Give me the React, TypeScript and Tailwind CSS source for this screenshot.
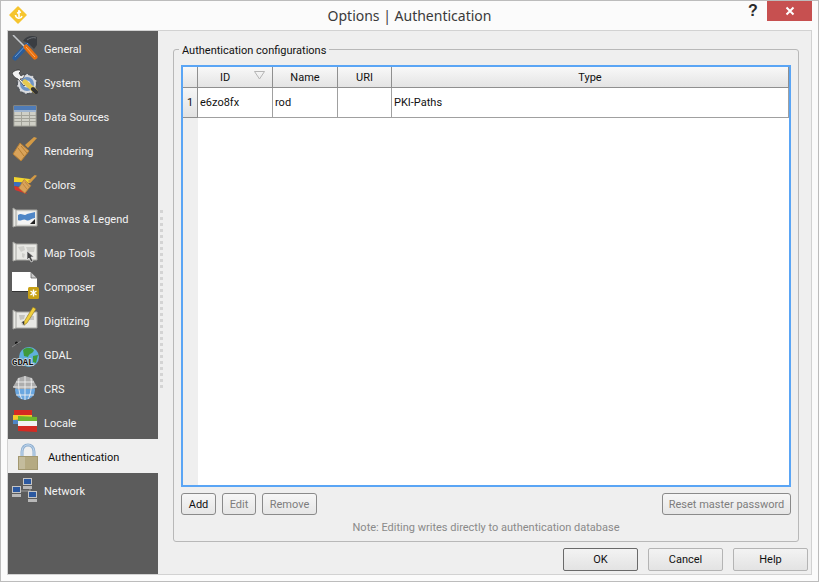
import { ReactNode } from "react";

const IconGeneral = () => (
  <svg viewBox="0 0 26 26" className="w-[26px] h-[26px] shrink-0">
    <path d="M3 23 L17 8" stroke="#2a5d9c" strokeWidth="5" strokeLinecap="round" />
    <path d="M3 22 L16 8" stroke="#6f9dd2" strokeWidth="1" />
    <path d="M11 6 C14 1 20 0 25 2 L25 10 L22 14 L18 10 C17 8 14 7 11 6 Z" fill="#3a3d42" />
    <path d="M15 5 C18 3 21 2 24 3" stroke="#6d7176" strokeWidth="1" fill="none" />
    <path d="M1 0 L14 13" stroke="#c4c8cc" strokeWidth="1.500" />
    <path d="M14 12 L23 22" stroke="#e8700f" strokeWidth="5" strokeLinecap="round" />
    <path d="M14 12 L23 22" stroke="#fbae68" strokeWidth="1" />
  </svg>
);

const IconSystem = () => (
  <svg viewBox="0 0 26 26" className="w-[26px] h-[26px] shrink-0">
    <circle cx="15" cy="15" r="10" fill="#d8dade" stroke="#55585c" strokeDasharray="4 2" strokeWidth="2" />
    <circle cx="15" cy="15" r="7" fill="#6f94c4" />
    <circle cx="15" cy="15" r="3.500" fill="#dfe3e8" />
    <path d="M0 4 C3 1 7 0 9 2 L7 4 L9 7 L12 5 C13 8 11 10 8 10 L14 15 L12 17 L6 10 C3 9 1 7 0 4 Z" fill="#f2f2f2" stroke="#2c2c2c" strokeWidth="0.7" />
    <path d="M13 13 L23 22" stroke="#e6c94e" strokeWidth="5" strokeLinecap="round" />
    <path d="M21 20 L24 23" stroke="#333" strokeWidth="4" strokeLinecap="round" />
  </svg>
);

const IconDataSources = () => (
  <svg viewBox="0 0 26 26" className="w-[26px] h-[26px] shrink-0">
    <rect x="2" y="3" width="22" height="20" fill="#cfcfc6" stroke="#a9a9a0" />
    <rect x="2" y="3" width="22" height="4" fill="#4f7cb8" />
    <rect x="2" y="7" width="22" height="2" fill="#9fb4cf" />
    <path d="M2 12.500H24M2 15.500H24M2 18.500H24M9.500 9V23M17.500 9V23" stroke="#a3a39a" strokeWidth="1" />
  </svg>
);

const IconBrush = () => (
  <>
    <path d="M22 0 L25 1 L16 11 L13 8 Z" fill="#d39a45" />
    <path d="M8 6 L17 14 L9 24 L1 17 Z" fill="#d9a35a" stroke="#b67f33" />
    <path d="M6 11 L12 19 M9 9 L15 16" stroke="#b67f33" strokeWidth="1" />
  </>
);

const IconRendering = () => (
  <svg viewBox="0 0 26 26" className="w-[26px] h-[26px] shrink-0">
    <IconBrush />
  </svg>
);

const IconColors = () => (
  <svg viewBox="0 0 26 26" className="w-[26px] h-[26px] shrink-0">
    <path d="M2 6 L18 8 L18 12 L2 11 Z" fill="#f2d52e" />
    <path d="M2 11 L14 12 L12 16 L2 15 Z" fill="#3a6fc2" />
    <path d="M2 15 L11 17 L15 23 L3 19 Z" fill="#d8342c" />
    <g transform="translate(6 4) scale(0.76)">
      <IconBrush />
    </g>
  </svg>
);

const MapSheet = ({ children }: { children?: ReactNode }) => (
  <svg viewBox="0 0 26 26" className="w-[26px] h-[26px] shrink-0">
    <path d="M1 3 L4 5 L25 5 L25 21 L4 21 L1 22 Z" fill="#e9e9e5" stroke="#a6a6a2" />
    <path d="M4 5 L4 21" stroke="#a6a6a2" />
    {children}
  </svg>
);

const IconCanvas = () => (
  <MapSheet>
    <rect x="6" y="7" width="17" height="12" fill="#f4f4f4" />
    <path d="M6 10 C10 7 12 12 15 9 L23 7 L23 13 C19 13 17 17 14 15 C11 13 9 17 6 15 Z" fill="#4f86c6" />
    <path d="M18 19 L23 14 L23 19 Z" fill="#222" />
  </MapSheet>
);

const IconMapTools = () => (
  <MapSheet>
    <path d="M6 8 L12 7 L13 11 L9 13 Z M14 8 L23 8 L22 13 L16 13 Z M10 14 L13 15 L12 19 L10 18 Z" fill="#d0d0cc" />
    <path d="M15 12 L15 21 L17 19 L19 23 L21 22 L19 18 L22 18 Z" fill="#444" stroke="#e8e8e8" strokeWidth="0.7" />
  </MapSheet>
);

const IconComposer = () => (
  <svg viewBox="0 0 26 26" className="w-[26px] h-[26px] shrink-0 overflow-visible">
    <path d="M0 -1 L19 -1 L25 5 L25 18 L0 18 Z" fill="#fff" />
    <path d="M19 -1 L19 5 L25 5 Z" fill="#c9c9c9" stroke="#555" strokeWidth="0.7" />
    <path d="M0 18.500 L17 18.500" stroke="#333" />
    <rect x="16" y="14" width="11" height="12" rx="1.500" fill="#c8a116" />
    <path d="M21.500 16.500 V23.500 M18.500 18 L24.500 22 M24.500 18 L18.500 22" stroke="#fff" strokeWidth="1.400" />
  </svg>
);

const IconDigitizing = () => (
  <MapSheet>
    <path d="M7 8 L13 8 L12 12 L8 13 Z M15 8 L22 9 L22 13 L16 13 Z M9 15 L14 15 L13 19 L10 18 Z" fill="#c4c4c0" />
    <path d="M21 0 L24 2 L15 16 L12 18 L12.500 14 Z" fill="#f0cf3c" stroke="#8a7420" strokeWidth="0.6" />
    <path d="M12 14 L10 15 L12 18" fill="#333" />
  </MapSheet>
);

const IconGdal = () => (
  <svg viewBox="0 0 26 26" className="w-[26px] h-[26px] shrink-0 overflow-visible">
    <circle cx="17" cy="16" r="10" fill="#5fb0dc" />
    <path d="M11 9 C14 6 19 6 22 9 C21 13 17 12 16 16 L12 15 Z M21 15 L26 14 L24 22 L21 21 Z" fill="#3f9a3a" />
    <circle cx="4.500" cy="2" r="1.500" fill="#111" />
    <path d="M0 6 L9 0" stroke="#888" strokeWidth="1" />
    <text x="0" y="24" fill="#111" stroke="#d4d8da" strokeWidth="1.500" paintOrder="stroke" fontSize="9" fontWeight="700" fontFamily="Liberation Mono, monospace">
      GDAL
    </text>
  </svg>
);

const IconCrs = () => (
  <svg viewBox="0 0 26 26" className="w-[26px] h-[26px] shrink-0">
    <circle cx="13" cy="15" r="10" fill="#6aa7e0" />
    <path d="M13 1 L20 3 L25 12 L21 14 L5 14 L1 12 L6 3 Z" fill="#adadad" />
    <path d="M13 1 V25 M7 3 C6 10 7 20 10 24 M19 3 C20 10 19 20 16 24 M4 7 H22 M1 12 H25 M4 20 H22" stroke="#f0f0f0" strokeWidth="0.9" fill="none" />
  </svg>
);

const IconLocale = () => (
  <svg viewBox="0 0 26 26" className="w-[26px] h-[26px] shrink-0">
    <path d="M2 1 L20 1 L20 6 L2 6 Z" fill="#d42a22" />
    <path d="M1 6 L20 6 L20 10 L1 11 Z" fill="#f4c92b" />
    <path d="M1 11 L6 11 L6 15 L1 15 Z" fill="#4f86c6" />
    <path d="M6 7 L25 8 L25 12 L6 12 Z" fill="#6cb52d" />
    <path d="M6 12 L25 12 L25 17 L6 17 Z" fill="#f2f2f2" />
    <path d="M6 17 L25 17 L25 23 L6 22 Z" fill="#d42a22" />
  </svg>
);

const IconLock = () => (
  <svg viewBox="0 0 20 27" className="w-5 h-[27px] shrink-0">
    <path d="M4 14 V9 C4 -0.500 16 -0.500 16 9 V14" fill="none" stroke="#8fafd0" strokeWidth="3" />
    <path d="M4 14 V9 C4 -0.500 16 -0.500 16 9 V14" fill="none" stroke="#c8dcf0" strokeWidth="1" />
    <rect x="0.500" y="13.500" width="19" height="13" fill="#b5aa82" stroke="#a39870" />
    <rect x="1" y="14" width="6" height="12" fill="#c4bc9d" />
  </svg>
);

const Pc = ({ x, y }: { x: number; y: number }) => (
  <g transform={`translate(${x} ${y})`}>
    <rect x="0" y="0" width="9" height="7" fill="#c4c4c4" />
    <rect x="1" y="1" width="7" height="5" fill="#2b58a0" />
    <rect x="0" y="8" width="9" height="3" fill="#b8b8b8" />
  </g>
);

const IconNetwork = () => (
  <svg viewBox="0 0 26 26" className="w-[26px] h-[26px] shrink-0">
    <path d="M5 14 H18 M18 10 V16" stroke="#9a9a9a" strokeWidth="1" />
    <Pc x={0} y={9} />
    <Pc x={11} y={1} />
    <Pc x={16} y={14} />
  </svg>
);

const navItems = [
  { label: "General", icon: <IconGeneral /> },
  { label: "System", icon: <IconSystem /> },
  { label: "Data Sources", icon: <IconDataSources /> },
  { label: "Rendering", icon: <IconRendering /> },
  { label: "Colors", icon: <IconColors /> },
  { label: "Canvas & Legend", icon: <IconCanvas /> },
  { label: "Map Tools", icon: <IconMapTools /> },
  { label: "Composer", icon: <IconComposer /> },
  { label: "Digitizing", icon: <IconDigitizing /> },
  { label: "GDAL", icon: <IconGdal /> },
  { label: "CRS", icon: <IconCrs /> },
  { label: "Locale", icon: <IconLocale /> },
];

const NavRow = ({ label, icon }: { label: string; icon: ReactNode }) => (
  <div className="h-[34px] flex items-center pl-1 gap-1.5 text-[#f4f4f4]">
    {icon}
    <span className="pt-[2px]">{label}</span>
  </div>
);

const baseBtn =
  "h-[22px] rounded-[3px] border border-[#8a8a8a] bg-gradient-to-b from-[#f6f6f6] to-[#e6e6e6] flex items-center justify-center";

const headCell =
  "h-[21px] flex items-center justify-center border-r border-b border-[#8f8f8f] bg-gradient-to-b from-[#f8f8f8] to-[#e4e4e4]";

const rowCell = "h-[30px] flex items-center pl-[2px] border-r border-b border-[#a0a0a0] bg-white";

const DialogButton = ({ label, def }: { label: string; def?: boolean }) => (
  <button
    className={`w-[75px] h-[23px] rounded-[2px] border bg-gradient-to-b from-[#f3f3f3] to-[#e3e3e3] flex items-center justify-center text-[#111] ${
      def ? "border-[#6a6a6a]" : "border-[#b4b4b4]"
    }`}
  >
    {label}
  </button>
);

export default function App() {
  return (
    <div className="w-[819px] h-[582px] border border-[#bcbcbc] bg-[#fbfbfb] flex flex-col overflow-hidden font-['Roboto',sans-serif] text-[11px] leading-none">
      {/* title bar */}
      <div className="h-[29px] shrink-0 flex items-start relative">
        <svg viewBox="0 0 18 18" className="w-[18px] h-[18px] ml-[8px] mt-[5px] shrink-0">
          <path d="M9 1 L17 9 L9 17 L1 9 Z" fill="#f6c52f" stroke="#f6c52f" strokeWidth="1.500" strokeLinejoin="round" />
          <path d="M10 4 L10 11 M6.500 9 C7 13 12 13 13 10 M8 7 L12 6" stroke="#fff" strokeWidth="1.600" fill="none" />
        </svg>
        <div className="flex-1 text-center font-['Noto_Sans',sans-serif] text-[14px] leading-[30px] text-[#3a3a3a] pl-[46px]">
          Options | Authentication
        </div>
        <div className="w-[14px] text-center text-[16px] font-bold leading-[20px] text-[#2a2a2a] mr-[7px] font-['Liberation_Sans',sans-serif]">
          ?
        </div>
        <div className="w-[45px] h-[20px] mr-[6px] bg-[#c75050] flex items-center justify-center">
          <svg viewBox="0 0 10 10" className="w-[10px] h-[10px]">
            <path d="M1.500 1.500 L8.500 8.500 M8.500 1.500 L1.500 8.500" stroke="#fff" strokeWidth="2" />
          </svg>
        </div>
      </div>

      {/* content frame */}
      <div className="mx-[6px] h-[545px] shrink-0 border border-[#d2d2d2] bg-[#efefef] flex">
        <div className="w-[150px] shrink-0 bg-[#5c5c5c] flex flex-col">
          {navItems.map((item) => (
            <NavRow key={item.label} label={item.label} icon={item.icon} />
          ))}
          <div className="h-[34px] flex items-center pl-2.5 gap-2.5 bg-[#efefef] text-[#111]">
            <IconLock />
            <span className="pt-[2px]">Authentication</span>
          </div>
          <NavRow label="Network" icon={<IconNetwork />} />
        </div>

        {/* splitter */}
        <div className="w-[15px] shrink-0 flex items-center">
          <div className="ml-[2px] mt-[-8px] h-[178px] border-l-[3px] border-dotted border-[#d4d4d4]" />
        </div>

        <div className="flex-1 flex flex-col pr-[3px]">
          <div className="mt-[18px] mr-[9px] h-[493px] relative rounded-[3px] border border-[#b8b8b8] px-[7px] pt-[15px] flex flex-col">
            <span className="absolute left-[5px] -top-[6px] px-[3px] bg-[#efefef] text-[#111] text-[11px] leading-[14px]">
              Authentication configurations
            </span>

            <div className="h-[422px] border-2 border-[#5aa5f5] bg-white text-[#111] flex flex-col">
              <div className="grid grid-cols-[15px_75px_65px_54px_1fr]">
                <div className={headCell} />
                <div className={`${headCell} relative pr-[20px]`}>
                  ID
                  <svg viewBox="0 0 11 9" className="absolute right-[7px] top-[4px] w-[11px] h-[9px]">
                    <path d="M0.500 0.500 H10.500 L5.500 8 Z" fill="none" stroke="#b5b5b5" />
                  </svg>
                </div>
                <div className={headCell}>Name</div>
                <div className={headCell}>URI</div>
                <div className={headCell}>Type</div>
                <div className="h-[30px] flex items-center justify-center border-r border-b border-[#8f8f8f] bg-gradient-to-b from-[#f6f6f6] to-[#e2e2e2]">
                  1
                </div>
                <div className={rowCell}>e6zo8fx</div>
                <div className={rowCell}>rod</div>
                <div className={rowCell} />
                <div className={rowCell}>PKI-Paths</div>
              </div>
              <div className="flex-1 w-[15px] bg-[#efefef]" />
            </div>

            <div className="mt-[6px] flex gap-[6px] text-[#7d7d7d]">
              <button className={`${baseBtn} w-[35px] text-[#111] border-[#6f6f6f]`}>Add</button>
              <button className={`${baseBtn} w-[34px]`}>Edit</button>
              <button className={`${baseBtn} w-[55px]`}>Remove</button>
              <button className={`${baseBtn} w-[129px] ml-auto`}>Reset master password</button>
            </div>
            <div className="mt-[7px] text-center text-[#8a8a8a]">
              Note: Editing writes directly to authentication database
            </div>
          </div>

          <div className="mt-[6px] flex justify-end gap-[10px]">
            <DialogButton label="OK" def />
            <DialogButton label="Cancel" />
            <DialogButton label="Help" />
          </div>
        </div>
      </div>
    </div>
  );
}
